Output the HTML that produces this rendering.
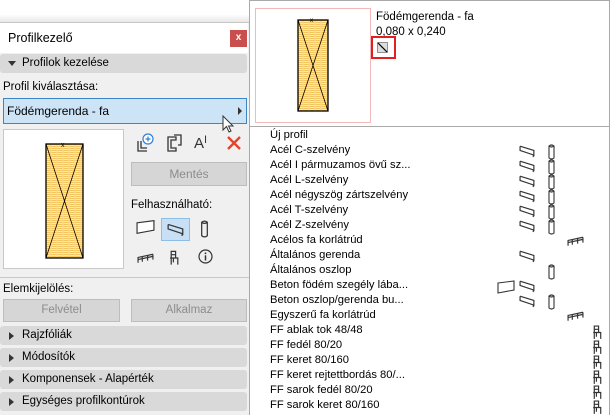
<!DOCTYPE html>
<html><head><meta charset="utf-8"><style>
*{margin:0;padding:0;box-sizing:border-box}
body{width:610px;height:415px;overflow:hidden;background:#fff;font-family:"Liberation Sans",sans-serif;font-size:11.5px;color:#000;position:relative}
.abs{position:absolute}
#left{left:0;top:22px;width:249px;height:393px;background:#f0f0f0;border-top:1px solid #c8c8c8}
.t{position:absolute;white-space:nowrap;font-size:11.5px}
.sec{position:absolute;left:0;width:247px;height:19px;background:#d9d9d9;border-radius:3px}
.sec .t{left:22px;top:3px}
.tri{position:absolute;left:9px;top:6px;width:0;height:0;border-top:4px solid transparent;border-bottom:4px solid transparent;border-left:5px solid #333}
.btn{position:absolute;background:#d6d6d6;border:1px solid #bdbdbd;color:#8c8c8c;text-align:center;font-size:11.5px}
#pop{left:249px;top:0;width:361px;height:415px;background:#fff;border:1px solid #a9a9a9;border-bottom:none}
.row{position:absolute;left:20px;font-size:11.2px;white-space:nowrap}
.ic{position:absolute;overflow:visible}
</style></head><body>
<svg width="0" height="0" style="position:absolute">
<defs>
<symbol id="beam" viewBox="0 0 16 13"><path d="M1 2 L14 6 L14 11 L13 12 M1 2 L1 6 L13 10 L14 11" fill="none" stroke="#333" stroke-width="1.1"/></symbol>
<symbol id="col" viewBox="0 0 8 16"><path d="M1.5 2 Q4 0 6.5 2 L6.5 14 Q4 16 1.5 14 Z M1.5 2 Q4 4 6.5 2" fill="none" stroke="#333" stroke-width="1.1"/></symbol>
<symbol id="rail" viewBox="0 0 16 10"><path d="M1 9 L1 4 L15 1 M1 6 L15 3 M5 8 L5 3 M10 7 L10 2 M15 6 L15 1" fill="none" stroke="#333" stroke-width="1.1"/></symbol>
<symbol id="chair" viewBox="0 0 10 14"><path d="M2 13 L2 1 L6 1 L6 7 M2 7 L8 7 L8 13 M4 7 L4 11 M2 4 L6 4 M1 7 L2 7" fill="none" stroke="#333" stroke-width="1.1"/></symbol>
<symbol id="slab" viewBox="0 0 18 14"><path d="M1 3 L17 1 L17 10 L1 13 Z" fill="#fff" stroke="#333" stroke-width="1.1"/></symbol>
<pattern id="wood" width="6" height="4" patternUnits="userSpaceOnUse"><rect width="6" height="4" fill="#f3c45a"/><path d="M0 1 Q3 0 6 1 M0 3 Q3 2 6 3" stroke="#fff6dc" stroke-width="0.8" fill="none"/></pattern>
</defs></svg>

<div class="abs" style="left:0;top:14px;width:249px;height:9px;background:linear-gradient(#fff,#e4e4e4)"></div>
<div id="left" class="abs">
  <div class="abs" style="left:0;top:0;width:248px;height:30px;background:#fff"></div>
  <div class="t" style="left:8px;top:8px;font-size:12.5px">Profilkezelő</div>
  <div class="abs" style="left:230px;top:7px;width:17px;height:17px;background:#c94f4f;color:#fff;font-size:10px;text-align:center;line-height:16px;font-weight:bold">x</div>
  <div class="sec" style="top:31px"><div class="tri" style="border-left:4px solid transparent;border-right:4px solid transparent;border-top:5px solid #333;border-bottom:none;left:8px;top:7px"></div><div class="t">Profilok kezelése</div></div>
  <div class="t" style="left:3px;top:58px">Profil kiválasztása:</div>
  <div class="abs" style="left:3px;top:75px;width:244px;height:26px;background:#cde4f7;border:1px solid #3b86c6"></div>
  <div class="t" style="left:7px;top:81px;font-size:12px">Födémgerenda - fa</div>
  <div class="abs" style="left:238px;top:84px;border-top:4px solid transparent;border-bottom:4px solid transparent;border-left:4px solid #333"></div>
  <svg class="abs" style="left:222px;top:92px" width="14" height="20" viewBox="0 0 14 20"><path d="M1 1 L1 15 L4.5 11.5 L7 17 L9 16 L6.5 11 L11 11 Z" fill="#fff" stroke="#333" stroke-width="1"/></svg>
  <div class="abs" style="left:3px;top:106px;width:121px;height:140px;background:#fff;border:1px solid #c9c9c9"></div>
  <svg class="abs" style="left:45px;top:118px" width="40" height="120" viewBox="0 0 40 120"><rect x="1" y="3" width="37" height="114" fill="url(#wood)" stroke="#000" stroke-width="1.3"/><path d="M1 3 L38 117 M38 3 L1 117" stroke="#000" stroke-width="0.8"/><text x="16" y="6" font-size="7" font-family="Liberation Sans">x</text></svg>
  <svg class="abs" style="left:135px;top:110px" width="20" height="20" viewBox="0 0 20 20"><path d="M3 8 L3 18 L12 18 M6 8 L6 15 L12 15" fill="none" stroke="#333" stroke-width="1.3"/><circle cx="13" cy="6" r="5" fill="#fff" stroke="#2f7fd8" stroke-width="1.2"/><path d="M13 3.5 V8.5 M10.5 6 H15.5" stroke="#2f7fd8" stroke-width="1.2"/></svg>
  <svg class="abs" style="left:166px;top:110px" width="18" height="20" viewBox="0 0 18 20"><path d="M2 4 L2 18 L10 18 L10 15 L5 15 L5 7 L10 7 L10 4 Z M8 2 L15 2 L15 12 L12 12" fill="none" stroke="#333" stroke-width="1.3"/></svg>
  <div class="t" style="left:194px;top:111px;font-size:15px;color:#333">A<span style="font-size:11px;vertical-align:5px">I</span></div>
  <svg class="abs" style="left:226px;top:112px" width="16" height="16" viewBox="0 0 16 16"><path d="M2 2 L14 14 M14 2 L2 14" stroke="#e8412c" stroke-width="2.4"/></svg>
  <div class="btn" style="left:131px;top:139px;width:116px;height:24px;line-height:22px;font-size:12px">Mentés</div>
  <div class="t" style="left:131px;top:176px">Felhasználható:</div>
  <svg class="ic" style="left:136px;top:196px" width="19" height="16"><use href="#slab"/></svg>
  <div class="abs" style="left:161px;top:195px;width:29px;height:23px;background:#c8e0f6;border:1px solid #8ebde8"></div>
  <svg class="ic" style="left:167px;top:199px" width="18" height="15"><use href="#beam"/></svg>
  <svg class="ic" style="left:200px;top:197px" width="9" height="18"><use href="#col"/></svg>
  <svg class="ic" style="left:137px;top:230px" width="17" height="11"><use href="#rail"/></svg>
  <svg class="ic" style="left:169px;top:227px" width="11" height="16"><use href="#chair"/></svg>
  <svg class="abs" style="left:198px;top:226px" width="15" height="15" viewBox="0 0 15 15"><circle cx="7.5" cy="7.5" r="6.5" fill="none" stroke="#333" stroke-width="1.2"/><circle cx="7.5" cy="4.3" r="0.9" fill="#333"/><path d="M7.5 6.3 V11.5" stroke="#333" stroke-width="1.5"/></svg>
  <div class="abs" style="left:0;top:254px;width:249px;height:1px;background:#c8c8c8"></div>
  <div class="t" style="left:3px;top:260px">Elemkijelölés:</div>
  <div class="btn" style="left:3px;top:276px;width:117px;height:23px;line-height:21px">Felvétel</div>
  <div class="btn" style="left:131px;top:276px;width:116px;height:23px;line-height:21px">Alkalmaz</div>
  <div class="sec" style="top:303px"><div class="tri"></div><div class="t">Rajzfóliák</div></div>
  <div class="sec" style="top:325px"><div class="tri"></div><div class="t">Módosítók</div></div>
  <div class="sec" style="top:347px"><div class="tri"></div><div class="t">Komponensek - Alapérték</div></div>
  <div class="sec" style="top:369px"><div class="tri"></div><div class="t">Egységes profilkontúrok</div></div>
</div>

<div id="pop" class="abs">
  <div class="abs" style="left:5px;top:7px;width:116px;height:115px;border:1px solid #f4b8b8"></div>
  <svg class="abs" style="left:47px;top:14px" width="34" height="100" viewBox="0 0 34 100"><rect x="1" y="5" width="30" height="91" fill="url(#wood)" stroke="#000" stroke-width="1.3"/><path d="M1 5 L31 96 M31 5 L1 96" stroke="#000" stroke-width="0.8"/><text x="13" y="7" font-size="6" font-family="Liberation Sans">x</text></svg>
  <div class="t" style="left:126px;top:10px">Födémgerenda - fa</div>
  <div class="t" style="left:126px;top:25px">0,080 x 0,240</div>
  <div class="abs" style="left:121px;top:35px;width:25px;height:23px;border:2px solid #e02020"></div>
  <svg class="abs" style="left:126px;top:40px" width="14" height="13" viewBox="0 0 14 13"><rect x="1.5" y="1.5" width="10" height="10" fill="#ddd" stroke="#333" stroke-dasharray="1 1"/><path d="M2 2 L11 11" stroke="#000" stroke-width="1.2"/></svg>
  <div class="abs" style="left:0;top:125px;width:361px;height:1px;background:#a9a9a9"></div>
  <div class="row" style="top:128px">Új profil</div>
  <div class="row" style="top:143px">Acél C-szelvény</div>
  <div class="row" style="top:158px">Acél I pármuzamos övű sz...</div>
  <div class="row" style="top:173px">Acél L-szelvény</div>
  <div class="row" style="top:188px">Acél négyszög zártszelvény</div>
  <div class="row" style="top:203px">Acél T-szelvény</div>
  <div class="row" style="top:218px">Acél Z-szelvény</div>
  <div class="row" style="top:233px">Acélos fa korlátrúd</div>
  <div class="row" style="top:248px">Általános gerenda</div>
  <div class="row" style="top:263px">Általános oszlop</div>
  <div class="row" style="top:278px">Beton födém szegély lába...</div>
  <div class="row" style="top:293px">Beton oszlop/gerenda bu...</div>
  <div class="row" style="top:308px">Egyszerű fa korlátrúd</div>
  <div class="row" style="top:323px">FF ablak tok 48/48</div>
  <div class="row" style="top:338px">FF fedél 80/20</div>
  <div class="row" style="top:353px">FF keret 80/160</div>
  <div class="row" style="top:368px">FF keret rejtettbordás 80/...</div>
  <div class="row" style="top:383px">FF sarok fedél 80/20</div>
  <div class="row" style="top:398px">FF sarok keret 80/160</div>
  <svg class="ic" style="left:269px;top:143px" width="17" height="14"><use href="#beam"/></svg><svg class="ic" style="left:297px;top:143px" width="9" height="16"><use href="#col"/></svg>
  <svg class="ic" style="left:269px;top:158px" width="17" height="14"><use href="#beam"/></svg><svg class="ic" style="left:297px;top:158px" width="9" height="16"><use href="#col"/></svg>
  <svg class="ic" style="left:269px;top:173px" width="17" height="14"><use href="#beam"/></svg><svg class="ic" style="left:297px;top:173px" width="9" height="16"><use href="#col"/></svg>
  <svg class="ic" style="left:269px;top:188px" width="17" height="14"><use href="#beam"/></svg><svg class="ic" style="left:297px;top:188px" width="9" height="16"><use href="#col"/></svg>
  <svg class="ic" style="left:269px;top:203px" width="17" height="14"><use href="#beam"/></svg><svg class="ic" style="left:297px;top:203px" width="9" height="16"><use href="#col"/></svg>
  <svg class="ic" style="left:269px;top:218px" width="17" height="14"><use href="#beam"/></svg><svg class="ic" style="left:297px;top:218px" width="9" height="16"><use href="#col"/></svg>
  <svg class="ic" style="left:317px;top:235px" width="17" height="11"><use href="#rail"/></svg>
  <svg class="ic" style="left:269px;top:248px" width="17" height="14"><use href="#beam"/></svg>
  <svg class="ic" style="left:297px;top:263px" width="9" height="16"><use href="#col"/></svg>
  <svg class="ic" style="left:247px;top:279px" width="18" height="14"><use href="#slab"/></svg><svg class="ic" style="left:269px;top:278px" width="17" height="14"><use href="#beam"/></svg>
  <svg class="ic" style="left:269px;top:293px" width="17" height="14"><use href="#beam"/></svg><svg class="ic" style="left:297px;top:293px" width="9" height="16"><use href="#col"/></svg>
  <svg class="ic" style="left:317px;top:310px" width="17" height="11"><use href="#rail"/></svg>
  <svg class="ic" style="left:342px;top:324px" width="11" height="15"><use href="#chair"/></svg>
  <svg class="ic" style="left:342px;top:339px" width="11" height="15"><use href="#chair"/></svg>
  <svg class="ic" style="left:342px;top:354px" width="11" height="15"><use href="#chair"/></svg>
  <svg class="ic" style="left:342px;top:369px" width="11" height="15"><use href="#chair"/></svg>
  <svg class="ic" style="left:342px;top:384px" width="11" height="15"><use href="#chair"/></svg>
  <svg class="ic" style="left:342px;top:399px" width="11" height="15"><use href="#chair"/></svg>
</div>
</body></html>
